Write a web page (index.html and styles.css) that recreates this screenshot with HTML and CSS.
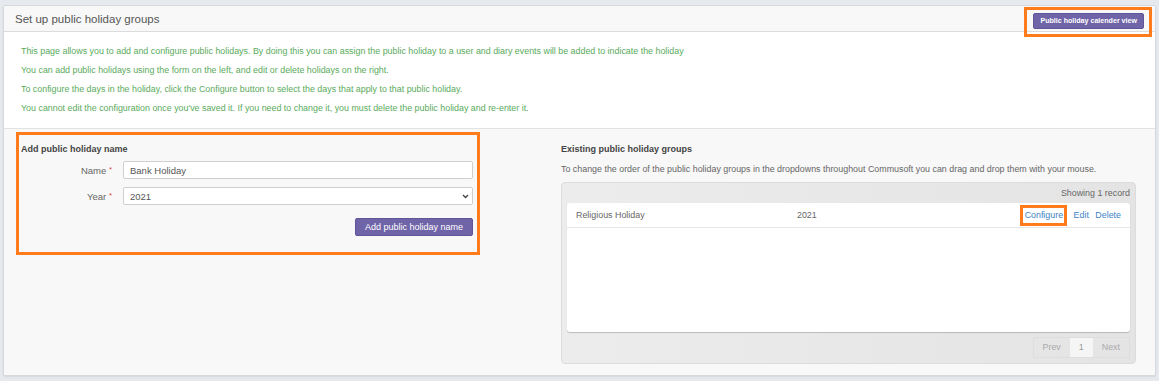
FILE: index.html
```html
<!DOCTYPE html>
<html lang="en">
<head>
    <meta charset="UTF-8">
    <meta name="viewport" content="width=device-width, initial-scale=1.0">
    <title>Public holiday groups</title>
    <link rel="stylesheet" href="styles.css">
</head>
<body>

<div class="panel">
    <div class="panel-heading">
        <h2>Set up public holiday groups</h2>
        <span class="callout">
            <button class="btn btn-calendar">Public holiday calender view</button>
        </span>
    </div>

    <!-- help text -->
    <div class="info">
        <p>This page allows you to add and configure public holidays. By doing this you can assign the public holiday to a user and diary events will be added to indicate the holiday</p>
        <p>You can add public holidays using the form on the left, and edit or delete holidays on the right.</p>
        <p>To configure the days in the holiday, click the Configure button to select the days that apply to that public holiday.</p>
        <p>You cannot edit the configuration once you've saved it. If you need to change it, you must delete the public holiday and re-enter it.</p>
    </div>

    <div class="panel-body">
        <div class="add-form">
            <h3>Add public holiday name</h3>
            <div class="form-row">
                <label>Name <span class="req">*</span></label>
                <input type="text" value="Bank Holiday">
            </div>
            <div class="form-row">
                <label>Year <span class="req">*</span></label>
                <div class="select-wrap">
                    <select>
                        <option>2021</option>
                    </select>
                    <svg class="chevron" width="7" height="5" viewBox="0 0 7 5">
                        <path d="M1 1 L3.5 3.5 L6 1" fill="none" stroke="#444" stroke-width="1.4"/>
                    </svg>
                </div>
            </div>
            <div class="form-actions">
                <button class="btn btn-add">Add public holiday name</button>
            </div>
        </div>

        <div class="existing">
            <h3>Existing public holiday groups</h3>
            <p class="hint">To change the order of the public holiday groups in the dropdowns throughout Commusoft you can drag and drop them with your mouse.</p>

            <div class="records">
                <div class="records-count">Showing 1 record</div>
                <div class="records-table">
                    <div class="record-row">
                        <span class="rec-name">Religious Holiday</span>
                        <span class="rec-year">2021</span>
                        <span class="rec-actions">
                            <a href="#" class="configure">Configure</a>
                            <a href="#">Edit</a>
                            <a href="#">Delete</a>
                        </span>
                    </div>
                </div>
                <div class="pager-wrap">
                    <div class="pager">
                        <span class="pg">Prev</span>
                        <span class="pg current">1</span>
                        <span class="pg">Next</span>
                    </div>
                </div>
            </div>
        </div>
    </div>
</div>

</body>
</html>
```

FILE: styles.css
```css
body {
    margin: 0;
    padding: 5px 3px 4px 3px;
    background-color: #e6e9ed;
    font-family: "Liberation Sans", Arial, sans-serif;
    font-size: 9px;
    color: #555;
}

.panel {
    background-color: #f8f8f8;
    border: 1px solid #d6d9dc;
    border-radius: 2px;
    box-shadow: 0 1px 2px rgba(0, 0, 0, 0.08);
}

.panel-heading {
    height: 25px;
    display: flex;
    justify-content: space-between;
    align-items: center;
    padding: 0 3px 0 11px;
    background-color: #f8f8f8;
    border-bottom: 1px solid #dcdcdc;
}

.panel-heading h2 {
    margin: 0;
    font-size: 11.5px;
    font-weight: normal;
    color: #555;
}

/* orange callout boxes */
.callout {
    position: relative;
    z-index: 1;
    align-self: flex-start;
    display: flex;
    margin-top: 1px;
    padding: 3px 5px 5px 6px;
    border: 3px solid #ff7b1c;
}

.btn {
    font-family: "Liberation Sans", Arial, sans-serif;
    background-color: #6f64a8;
    color: #fff;
    border: 1px solid #5f5599;
    border-radius: 2px;
    cursor: pointer;
}

.btn-calendar {
    height: 16px;
    padding: 0 6px;
    font-size: 7.1px;
    font-weight: bold;
}

/* help text */
.info {
    background-color: #fff;
    padding: 10px 17px 10px;
    border-bottom: 1px solid #e2e2e2;
}

.info p {
    margin: 0;
    line-height: 19px;
    font-size: 8.9px;
    color: #5aab5c;
}

.panel-body {
    display: flex;
    align-items: flex-start;
    padding: 3px 19px 11px 12px;
}

h3 {
    margin: 0;
    font-size: 9px;
    font-weight: bold;
    color: #444;
}

/* left form */
.add-form {
    width: 452px;
    border: 3px solid #ff7b1c;
    padding: 9px 4px 16px 2px;
    flex-shrink: 0;
}

.form-row {
    display: flex;
    align-items: center;
    margin-top: 7px;
}

.form-row + .form-row {
    margin-top: 8px;
}

.form-row label {
    width: 91px;
    text-align: right;
    padding-right: 11px;
    color: #666;
    font-size: 9.5px;
}

.req {
    color: #e04848;
    font-size: 8px;
    vertical-align: top;
}

.form-row input,
.form-row select {
    flex: 1;
    height: 18px;
    box-sizing: border-box;
    border: 1px solid #cfcfcf;
    border-radius: 2px;
    background-color: #fff;
    font-family: "Liberation Sans", Arial, sans-serif;
    font-size: 9.5px;
    color: #555;
    padding: 0 6px;
}

.select-wrap {
    flex: 1;
    display: flex;
    position: relative;
}

.form-row select {
    appearance: none;
    -webkit-appearance: none;
    width: 100%;
}

.chevron {
    position: absolute;
    right: 4px;
    top: 7px;
    pointer-events: none;
}

.form-actions {
    display: flex;
    justify-content: flex-end;
    margin-top: 13px;
}

.btn-add {
    height: 18px;
    padding: 0 9px;
    font-size: 9px;
}

/* right list */
.existing {
    flex: 1;
    margin-left: 81px;
    padding-top: 12px;
}

.hint {
    margin: 10px 0 8px;
    font-size: 8.9px;
    color: #666;
}

.records {
    background: linear-gradient(to right, #ececec, #e4e4e4);
    border: 1px solid #dcdcdc;
    border-radius: 4px;
    padding: 0 5px 5px;
}

.records-count {
    text-align: right;
    font-size: 8.9px;
    color: #666;
    padding: 5px 0 5px;
}

.records-table {
    background-color: #fff;
    height: 129px;
    border-radius: 3px;
    box-shadow: 0 1px 1px rgba(0, 0, 0, 0.2);
}

.record-row {
    display: flex;
    align-items: center;
    height: 24px;
    padding: 0 9px;
    border-bottom: 1px solid #e6e6e6;
    font-size: 8.9px;
    color: #666;
}

.rec-name {
    width: 221px;
}

.rec-year {
    flex: 1;
}

.rec-actions a {
    color: #3c84c6;
    text-decoration: none;
    margin-left: 4px;
}

.rec-actions a.configure {
    display: inline-block;
    border: 3px solid #ff7b1c;
    padding: 2px 1px 2px 2px;
    line-height: 11px;
}

.pager-wrap {
    display: flex;
    justify-content: flex-end;
    margin-top: 5px;
}

.pager {
    display: flex;
    border: 1px solid #dedede;
    border-radius: 2px;
}

.pager .pg {
    padding: 0 9px;
    line-height: 19px;
    color: #aaa;
    font-size: 8.9px;
}

.pager .current {
    background-color: #f5f5f5;
    color: #999;
}
```
